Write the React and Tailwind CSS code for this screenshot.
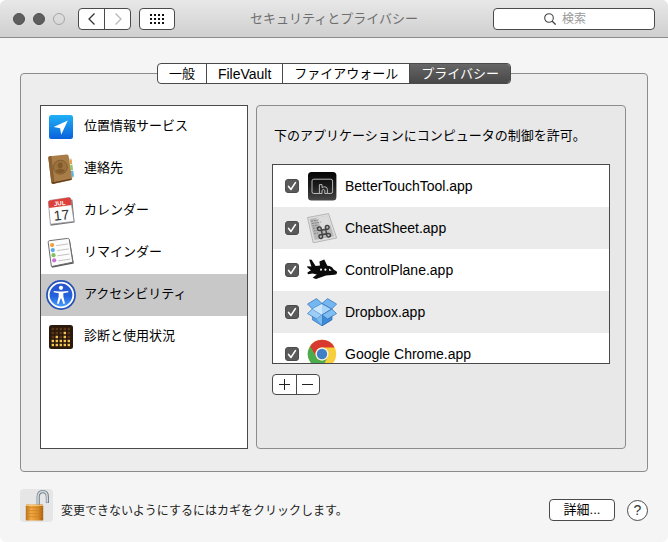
import React, { useState } from "react";

const ICON = "h-[30px] w-[30px] shrink-0";

function LocationIcon() {
  return (
    <svg viewBox="0 0 30 30" className={ICON} aria-hidden="true">
      <defs>
        <linearGradient id="loc" x1="0" y1="0" x2="0" y2="1">
          <stop offset="0" stopColor="#1fb0f5" />
          <stop offset="1" stopColor="#0a62dc" />
        </linearGradient>
      </defs>
      <rect x="3" y="3" width="24" height="24" rx="2.5" fill="url(#loc)" />
      <path d="M21.8 8.6 L7.6 15 L14.1 16.2 L15.2 22.8 Z" fill="#fff" />
    </svg>
  );
}

function ContactsIcon() {
  return (
    <svg viewBox="0 0 30 30" className={ICON} aria-hidden="true">
      <path d="M22 4 L25.5 4.3 L28 23.5 L25 26 Z" fill="#e8e4d8" />
      <path d="M23.5 5.5 L25.6 5.5 L26.2 10 L24 10 Z" fill="#e0a54a" />
      <path d="M24.2 11 L26.4 11 L27 16 L24.8 16 Z" fill="#8cc86a" />
      <path d="M24.9 17 L27.2 17 L27.9 22.5 L25.6 23 Z" fill="#58b4d8" />
      <path d="M3.6 2.2 L20.6 0.4 Q22.3 0.2 22.6 2 L26 24.3 Q26.2 25.8 24.6 26.2 L7.4 30 Q5.6 30 5.3 28.4 L2.3 4 Q2.2 2.4 3.6 2.2 Z" fill="#a87d48" />
      <path d="M3.6 2.2 L5.4 2 L8.6 29.5 L7.4 30 Q5.6 30 5.3 28.4 L2.3 4 Q2.2 2.4 3.6 2.2Z" fill="#8a6032" />
      <path d="M6 28.6 L25.8 24.4 L25.6 25.8 L7 29.8 Z" fill="#5f3e1b" />
      <circle cx="14.3" cy="13.2" r="7" fill="#9b713d" stroke="#7c5828" strokeWidth="0.8" />
      <ellipse cx="14.2" cy="11.5" rx="2.4" ry="3" fill="#7f5a2b" />
      <path d="M9.6 17.3 Q10.5 15.2 14.4 15 Q18.4 14.8 19.2 16.7 Q14.6 21.6 9.6 17.3Z" fill="#7f5a2b" />
    </svg>
  );
}

function CalendarIcon() {
  return (
    <svg viewBox="0 0 30 30" className={ICON} aria-hidden="true">
      <path d="M2.6 7 L26.4 3.6 L28.6 26.4 L4.6 29.8 Z" fill="#77777a" />
      <path d="M2.4 6.4 Q2.2 4.8 3.8 4.4 L22.6 1.6 Q24.4 1.4 24.7 3 L28 25.4 L4.4 28.3 Z" fill="#fdfdfd" stroke="#8d8d90" strokeWidth="0.7" />
      <path d="M2.4 6.4 Q2.2 4.8 3.8 4.4 L22.6 1.6 Q24.4 1.4 24.7 3 L25.7 9 L3.1 12 Z" fill="#dd3f3a" />
      <g transform="rotate(-6 15 15)" fontFamily="Liberation Sans, Arial, sans-serif" textAnchor="middle">
        <text x="14.5" y="9.3" fontSize="6" fontWeight="700" fill="#fff">JUL</text>
        <text x="15" y="24" fontSize="14" fill="#333">17</text>
      </g>
    </svg>
  );
}

function RemindersIcon() {
  const rows = [
    [6.1, 7.1, "#f0a040"],
    [6.8, 12.1, "#5aa6ea"],
    [7.5, 17.2, "#7cc35a"],
    [8.2, 22.3, "#c672d6"],
  ];
  return (
    <svg viewBox="0 0 30 30" className={ICON} aria-hidden="true">
      <path d="M3.2 4 L23.8 1.4 L27.8 25.6 L6 29.8 Z" fill="#555" />
      <path d="M2.2 4.4 Q2 3 3.4 2.7 L21.6 0.4 Q23 0.3 23.3 1.6 L26.8 24.2 L5.4 28.6 Z" fill="#fcfcfc" stroke="#6d6d6d" strokeWidth="1" />
      {rows.map(([x, y, c]) => (
        <g key={c}>
          <circle cx={x} cy={y} r="2.1" fill={c} />
          <path d={`M${x + 4} ${y + 0.6} l12 -1.8`} stroke="#b5b5b5" strokeWidth="0.8" />
        </g>
      ))}
    </svg>
  );
}

function AccessibilityIcon() {
  return (
    <svg viewBox="0 0 30 30" className={ICON} aria-hidden="true">
      <defs>
        <linearGradient id="acc" x1="0" y1="0" x2="0" y2="1">
          <stop offset="0" stopColor="#2a52c8" />
          <stop offset="0.55" stopColor="#2460dc" />
          <stop offset="1" stopColor="#4aa4ff" />
        </linearGradient>
      </defs>
      <circle cx="15" cy="15" r="14.9" fill="#2450b8" />
      <circle cx="15" cy="15" r="12.3" fill="url(#acc)" stroke="#fff" strokeWidth="1.8" />
      <circle cx="15" cy="7.8" r="2.1" fill="#fff" />
      <path d="M7.8 10.9 L13 11.4 L17 11.4 L22.2 10.9 L22.4 12.3 L17.3 13.3 L17.4 16.8 L19 23.6 L17.4 24 L15.3 18.6 L14.7 18.6 L12.6 24 L11 23.6 L12.6 16.8 L12.7 13.3 L7.6 12.3 Z" fill="#fff" />
    </svg>
  );
}

function DiagnosticsIcon() {
  const lit = [2, 3, 2, 4, 2];
  return (
    <svg viewBox="0 0 30 30" className={ICON} aria-hidden="true">
      <rect x="3" y="3" width="24" height="24" rx="2.5" fill="#2b1a0c" />
      {lit.map((n, c) =>
        [0, 1, 2, 3, 4].map((r) => (
          <rect
            key={`${c}-${r}`}
            x={5.6 + c * 4}
            y={5.8 + r * 4}
            width="2.4"
            height="2.4"
            fill={r >= 5 - n ? "#f4c552" : "#5a3819"}
          />
        ))
      )}
    </svg>
  );
}

function BetterTouchToolIcon() {
  return (
    <svg viewBox="0 0 30 30" className={ICON} aria-hidden="true">
      <defs>
        <linearGradient id="btt" x1="0" y1="0" x2="0" y2="1">
          <stop offset="0" stopColor="#050505" />
          <stop offset="0.5" stopColor="#1c1c1c" />
          <stop offset="1" stopColor="#484848" />
        </linearGradient>
      </defs>
      <rect x="1" y="1" width="28.4" height="28.4" rx="3.5" fill="url(#btt)" />
      <path d="M12.4 22.5 H6.8 Q5 22.5 5 20.8 V10 Q5 8.2 6.8 8.2 H23.8 Q25.6 8.2 25.6 10 V20.8 Q25.6 22.5 23.8 22.5 H20.4 V18.4 Q20.2 15.8 17.8 15.8 Q16.2 15.8 15 16.6 V13.6 H12.4 V22.5 H15 V19.4 Q16.4 17.4 17.8 19.4 V22.5 H20.4" fill="none" stroke="#c9c9c9" strokeWidth="0.9" strokeLinejoin="round" />
    </svg>
  );
}

function CheatSheetIcon() {
  return (
    <svg viewBox="0 0 30 30" className={ICON} aria-hidden="true">
      <path d="M0.5 4.5 L21.6 0.6 L29.6 25 L6.2 29.8 Z" fill="#dedede" stroke="#a9a9a9" strokeWidth="0.8" />
      <path d="M2.6 6 L20.4 2.8 L27 23.2 L7.6 27 Z" fill="#b8b8b8" />
      <path d="M9 5 L20.4 2.8 L23.4 12 L15 16 Z" fill="#dcdcdc" />
      <path d="M4 8.2 l8 -1.4 M4.7 10.6 l9 -1.6 M5.3 13 l6 -1 M6 15.4 l6 -1 M6.6 18 l4 -.7 M7.2 20.6 l4 -.7" stroke="#7d7d7d" strokeWidth="0.9" strokeDasharray="2 .8" />
      <path transform="rotate(-10 17 19)" d="M14.8 16.8 H19.2 V21.2 H14.8 Z M14.8 16.8 H13 A1.8 1.8 0 1 1 14.8 15 Z M19.2 16.8 V15 A1.8 1.8 0 1 1 21 16.8 Z M19.2 21.2 H21 A1.8 1.8 0 1 1 19.2 23 Z M14.8 21.2 V23 A1.8 1.8 0 1 1 13 21.2 Z" fill="none" stroke="#444" strokeWidth="1.5" />
    </svg>
  );
}

function ControlPlaneIcon() {
  return (
    <svg viewBox="0 0 30 30" className={ICON} aria-hidden="true">
      <path d="M2.2 4.4 L4.6 4.8 L8.6 11 L13 10.6 L12.4 6.4 L17.2 4.4 L20.4 10.8 Q25 11.2 26.4 14.2 L30 16.8 Q30.4 19.4 27.6 19.8 L19 20.4 L9 24 L5.6 22.8 L9.8 19.6 L5.6 18.6 L1 19.2 L0.4 17.4 L4 15.2 L0.6 12.8 L0 11.2 L4.4 11.6 Z" fill="#0b0b0b" />
      <ellipse cx="14" cy="14.6" rx="1" ry="1.2" fill="#fff" />
      <ellipse cx="18.4" cy="14.6" rx="1" ry="1.2" fill="#fff" />
      <path d="M22 13.4 L24.6 15.4 L22 15.8 Z" fill="#fff" />
    </svg>
  );
}

function DropboxIcon() {
  return (
    <svg viewBox="0 0 30 30" className={ICON} aria-hidden="true">
      <g stroke="#2f70b8" strokeWidth="0.7" strokeLinejoin="round">
        <path d="M5.4 12 L15 18 L24.8 12 L24.8 22.8 L15 28.8 L5.4 22.8 Z" fill="#5aa4e6" />
        <path d="M15 18 L24.8 12 L24.8 22.8 L15 28.8 Z" fill="#3f8ad6" />
        <path d="M15 6.8 L24.8 12 L15 18 L5.4 12 Z" fill="#a8d4f8" />
        <path d="M0.5 7 L9.6 1.6 L15 6.4 L5.4 12 Z" fill="#74b6ef" />
        <path d="M29.6 7 L20.6 1.6 L15 6.4 L24.8 12 Z" fill="#74b6ef" />
        <path d="M0.5 16.6 L5.4 12 L15 18 L9.6 22 Z" fill="#9bcdf7" />
        <path d="M29.6 16.6 L24.8 12 L15 18 L20.6 22 Z" fill="#7fbdf2" />
      </g>
      <path d="M15 6.8 V18 L5.4 12 Z" fill="#c9e6fc" />
      <path d="M15 18 L9.6 22 L15 28 Z" fill="#7dbcf0" />
    </svg>
  );
}

function ChromeIcon() {
  return (
    <svg viewBox="0 0 30 30" className={ICON} aria-hidden="true">
      <circle cx="15" cy="15" r="14.2" fill="#f7cf3c" />
      <path d="M2.7 7.9 A14.2 14.2 0 0 1 27.3 7.9 L27.6 8.6 H15 A6.4 6.4 0 0 0 9.4 18.2 Z" fill="#d93a30" />
      <path d="M2.7 7.9 A14.2 14.2 0 0 0 15 29.2 L20.6 18.2 A6.4 6.4 0 0 1 9.4 18.2 L3.2 7.2 Z" fill="#4aac4c" />
      <circle cx="15" cy="15" r="6.5" fill="#f4f4f4" />
      <circle cx="15" cy="15" r="5.2" fill="#3f7fc4" />
    </svg>
  );
}

function PadlockIcon() {
  return (
    <svg viewBox="0 0 33 33" className="h-[33px] w-[33px]" aria-hidden="true">
      <defs>
        <linearGradient id="brass" x1="0" y1="0" x2="1" y2="0">
          <stop offset="0" stopColor="#b9701a" />
          <stop offset="0.3" stopColor="#f2ab45" />
          <stop offset="0.7" stopColor="#dc8c26" />
          <stop offset="1" stopColor="#a45e12" />
        </linearGradient>
      </defs>
      <path d="M18.2 16.5 V8 Q18.2 2.6 22.8 2.6 Q27.4 2.6 27.4 8 V14" fill="none" stroke="#77828a" strokeWidth="3.2" />
      <path d="M18 16.5 V8 Q18 2.6 22.8 2.6 Q27.2 2.6 27.2 8 V13.6" fill="none" stroke="#d3dbe0" strokeWidth="1.5" />
      <rect x="5.8" y="15.6" width="17.4" height="16" rx="1.2" fill="url(#brass)" />
      <path d="M6 18.6 H23 M6 21.6 H23 M6 24.6 H23 M6 27.6 H23" stroke="#c47c26" strokeWidth="0.6" />
      <path d="M6 16.4 H23" stroke="#f8cd84" strokeWidth="0.9" />
    </svg>
  );
}

const categories = [
  { name: "位置情報サービス", Icon: LocationIcon },
  { name: "連絡先", Icon: ContactsIcon },
  { name: "カレンダー", Icon: CalendarIcon },
  { name: "リマインダー", Icon: RemindersIcon },
  { name: "アクセシビリティ", Icon: AccessibilityIcon },
  { name: "診断と使用状況", Icon: DiagnosticsIcon },
];

const apps = [
  { name: "BetterTouchTool.app", Icon: BetterTouchToolIcon },
  { name: "CheatSheet.app", Icon: CheatSheetIcon },
  { name: "ControlPlane.app", Icon: ControlPlaneIcon },
  { name: "Dropbox.app", Icon: DropboxIcon },
  { name: "Google Chrome.app", Icon: ChromeIcon },
];

const tabs = [
  { name: "一般", size: "text-[13px]" },
  { name: "FileVault", size: "text-[14px]" },
  { name: "ファイアウォール", size: "text-[13px]" },
  { name: "プライバシー", size: "text-[13px]" },
];

function TitleBar() {
  return (
    <header className="flex h-[38px] items-center border-b border-[#8c8c8c] bg-linear-to-b from-[#e8e8e8] to-[#cfcfcf] px-[13px]">
      <div className="flex flex-1 items-center">
        <div className="flex gap-2">
          <button aria-label="閉じる" className="h-3 w-3 rounded-full border border-[#505050] bg-[#5e5e5e]" />
          <button aria-label="しまう" className="h-3 w-3 rounded-full border border-[#505050] bg-[#5e5e5e]" />
          <button aria-label="拡大" className="h-3 w-3 rounded-full border border-[#a6a6a6]" />
        </div>
        <div className="ml-[13px] flex h-[22px] w-[53px] divide-x divide-[#4a4a4a] rounded border border-[#4a4a4a] bg-white">
          <button aria-label="戻る" className="flex flex-1 items-center justify-center">
            <svg viewBox="0 0 10 14" className="h-3.5 w-2.5"><path d="M7.5 1.5 L2 7 L7.5 12.5" fill="none" stroke="#333" strokeWidth="1.3" /></svg>
          </button>
          <button aria-label="進む" disabled className="flex flex-1 items-center justify-center">
            <svg viewBox="0 0 10 14" className="h-3.5 w-2.5"><path d="M2.5 1.5 L8 7 L2.5 12.5" fill="none" stroke="#b8b8b8" strokeWidth="1.3" /></svg>
          </button>
        </div>
        <button aria-label="すべてを表示" className="ml-2 flex h-[22px] w-9 items-center justify-center rounded border border-[#4a4a4a] bg-white">
          <svg viewBox="0 0 14 10" className="h-2.5 w-3.5">
            {[0, 4, 8, 12].map((x) => [0, 4, 8].map((y) => <rect key={`${x}-${y}`} x={x} y={y} width="2" height="2" fill="#111" />))}
          </svg>
        </button>
      </div>
      <h1 className="text-[#6e6e6e]">セキュリティとプライバシー</h1>
      <div className="flex flex-1 justify-end">
        <label className="flex h-[22px] w-[162px] items-center gap-1.5 rounded border border-[#4a4a4a] bg-white pl-[50px]">
          <svg viewBox="0 0 12 12" className="h-3 w-3 shrink-0" aria-hidden="true">
            <circle cx="5" cy="5" r="4.3" fill="none" stroke="#444" strokeWidth="1.1" />
            <path d="M8 8 L11.6 11.6" stroke="#444" strokeWidth="1.3" />
          </svg>
          <input type="search" aria-label="検索" placeholder="検索" className="min-w-0 flex-1 appearance-none bg-transparent text-[12px] outline-none placeholder:text-[#9a9a9a]" />
        </label>
      </div>
    </header>
  );
}

function AppRow({ app: { name, Icon } }) {
  return (
    <li className="h-[42px] odd:bg-white even:bg-[#ebebeb]">
      <label className="flex h-full items-center gap-2 pl-3">
        <span className="relative flex">
          <input type="checkbox" defaultChecked className="peer h-3.5 w-3.5 appearance-none rounded-[3px] border border-[#4c4c4c] bg-white checked:bg-[#5a5a5a]" />
          <svg viewBox="0 0 14 14" className="pointer-events-none absolute inset-0 hidden h-3.5 w-3.5 peer-checked:block" aria-hidden="true">
            <path d="M3.6 7.4 L6 10.4 L10.4 3.6" fill="none" stroke="#fff" strokeWidth="1.6" strokeLinecap="round" strokeLinejoin="round" />
          </svg>
        </span>
        <Icon />
        <span className="text-[14px]">{name}</span>
      </label>
    </li>
  );
}

export default function App() {
  const [category, setCategory] = useState("アクセシビリティ");
  const [tab, setTab] = useState("プライバシー");

  return (
    <div className="min-h-screen bg-white font-['Liberation_Sans','Noto_Sans_CJK_JP',sans-serif] text-[13px] leading-5 text-black">
      <div className="flex min-h-screen flex-col overflow-hidden rounded-md bg-[#f5f5f5]">
        <TitleBar />
        <main className="flex flex-1 flex-col px-5 pt-[25px]">
          <div role="tablist" className="relative z-10 -mb-[11px] flex h-[21px] self-center divide-x divide-[#4a4a4a] overflow-hidden rounded border border-[#4a4a4a] bg-white">
            {tabs.map(({ name, size }) => (
              <button
                key={name}
                role="tab"
                aria-selected={tab === name}
                onClick={() => setTab(name)}
                className={`flex items-center px-[11px] aria-selected:bg-linear-to-b aria-selected:from-[#666] aria-selected:to-[#484848] aria-selected:text-white ${size}`}
              >
                {name}
              </button>
            ))}
          </div>
          <section className="flex flex-1 gap-2 rounded border border-[#8c8c8c] bg-[#ededed] pt-[31px] pr-[21px] pb-[22px] pl-[19px]">
            <ul className="w-[208px] shrink-0 border border-[#4a4a4a] bg-white">
              {categories.map(({ name, Icon }) => (
                <li key={name}>
                  <button
                    aria-pressed={category === name}
                    onClick={() => setCategory(name)}
                    className="flex h-[42px] w-full items-center gap-2 pl-[5px] text-left aria-pressed:bg-[#c8c8c8]"
                  >
                    <Icon />
                    <span className="pb-0.5">{name}</span>
                  </button>
                </li>
              ))}
            </ul>
            <div className="min-w-0 flex-1 rounded border border-[#8c8c8c] bg-[#e8e8e8] px-[15px] pt-5">
              <p className="pl-0.5">下のアプリケーションにコンピュータの制御を許可。</p>
              <ul className="mt-[18px] h-[200px] overflow-hidden border border-[#4a4a4a] bg-white">
                {apps.map((app) => (
                  <AppRow key={app.name} app={app} />
                ))}
              </ul>
              <div className="mt-2.5 flex h-[21px] w-12 divide-x divide-[#4a4a4a] rounded border border-[#4a4a4a] bg-white">
                <button aria-label="追加" className="flex flex-1 items-center justify-center">
                  <svg viewBox="0 0 11 11" className="h-[11px] w-[11px]"><path d="M5.5 0 V11 M0 5.5 H11" stroke="#222" /></svg>
                </button>
                <button aria-label="削除" className="flex flex-1 items-center justify-center">
                  <svg viewBox="0 0 11 11" className="h-[11px] w-[11px]"><path d="M0 5.5 H11" stroke="#222" /></svg>
                </button>
              </div>
            </div>
          </section>
        </main>
        <footer className="flex h-[70px] items-center px-5 pb-1">
          <button aria-label="カギ" className="rounded bg-[#e6e6e6]">
            <PadlockIcon />
          </button>
          <p className="ml-2 pt-3 text-[12px] text-[#222]">変更できないようにするにはカギをクリックします。</p>
          <div className="ml-auto flex items-center gap-3 pt-2.5">
            <button className="flex h-[22px] w-[66px] items-center justify-center rounded border border-[#4a4a4a] bg-white">詳細...</button>
            <button aria-label="ヘルプ" className="flex h-[21px] w-[21px] items-center justify-center rounded-full border border-[#4a4a4a] bg-white text-[14px] text-[#333]">?</button>
          </div>
        </footer>
      </div>
    </div>
  );
}
